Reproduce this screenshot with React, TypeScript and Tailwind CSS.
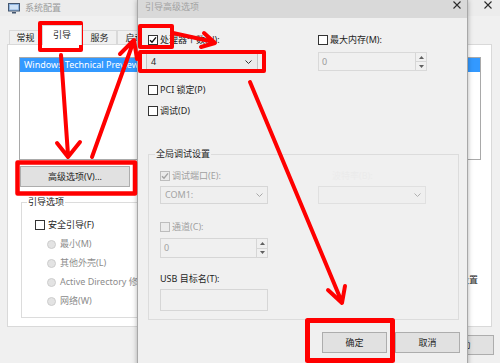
import React from "react";

function Check({ checked, disabled }: { checked?: boolean; disabled?: boolean }) {
  return (
    <span
      className={
        disabled
          ? "flex h-[10px] w-[10px] shrink-0 items-center justify-center border border-[#bdbdbd] bg-[#ebebeb]"
          : "flex h-[10px] w-[10px] shrink-0 items-center justify-center border border-[#333333] bg-white"
      }
    >
      {checked ? (
        <svg width="8" height="8" viewBox="0 0 8 8">
          <path d="M1 4.2 L3 6.3 L7 1.4" fill="none" stroke={disabled ? "#a3a3a3" : "#111"} strokeWidth="1.4" />
        </svg>
      ) : null}
    </span>
  );
}

function Radio({ label }: { label: string }) {
  return (
    <div className="flex h-[12px] items-center gap-[4px]">
      <span className="h-[9px] w-[9px] rounded-full border border-[#cdcdcd] bg-[#e3e3e3]" />
      <span className="text-[#8c8c8c]">{label}</span>
    </div>
  );
}

function Chevron({ color }: { color: string }) {
  return (
    <svg width="7" height="4" viewBox="0 0 7 4">
      <path d="M0.5 0.5 L3.5 3.5 L6.5 0.5" fill="none" stroke={color} strokeWidth="1" />
    </svg>
  );
}

function Spin() {
  return (
    <div className="flex w-[11px] flex-col border-l border-[#d6d6d6]">
      <div className="flex flex-1 items-center justify-center border-b border-[#d6d6d6]">
        <svg width="5" height="3" viewBox="0 0 5 3">
          <path d="M0 3 L2.5 0 L5 3Z" fill="#606060" />
        </svg>
      </div>
      <div className="flex flex-1 items-center justify-center">
        <svg width="5" height="3" viewBox="0 0 5 3">
          <path d="M0 0 L2.5 3 L5 0Z" fill="#606060" />
        </svg>
      </div>
    </div>
  );
}

function CloseX() {
  return (
    <svg width="8" height="8" viewBox="0 0 8 8">
      <path d="M0.5 0.5 L7.5 7.5 M7.5 0.5 L0.5 7.5" stroke="#2b2b2b" strokeWidth="1.1" />
    </svg>
  );
}

function Button({ label, w }: { label: string; w: string }) {
  return (
    <div className={`flex h-[21px] items-center justify-center border border-[#adadad] bg-[#e1e1e1] ${w}`}>
      {label}
    </div>
  );
}

function Annotations() {
  const red = "#ff0000";
  return (
    <svg className="pointer-events-none absolute inset-0" width="500" height="363" viewBox="0 0 500 363">
      <g fill="none" stroke={red} strokeWidth="4" strokeLinecap="round" strokeLinejoin="round">
        <rect x="40" y="23" width="41" height="27" strokeLinecap="butt" />
        <rect x="17.5" y="162.5" width="117.5" height="31" strokeWidth="4.5" strokeLinecap="butt" />
        <rect x="140" y="26" width="32" height="21" strokeLinecap="butt" />
        <rect x="140" y="52" width="124" height="19" strokeLinecap="butt" />
        <rect x="307.5" y="320.5" width="85" height="40" strokeWidth="5" strokeLinecap="butt" />

        <path d="M61 55 L68 155 M57 143 L68 157 L80 142" />
        <path d="M92 157 L133 43 M120 54 L134 40 L137 59" />
        <path d="M173 33 L214 42 M204 33 L215 43 L201 47" />
        <path d="M250 82 L341 300 M328 290 L342 303 L345 286" />
      </g>
    </svg>
  );
}

export default function App() {
  return (
    <div className="relative h-[363px] w-[500px] overflow-hidden bg-[#f0f0f0] font-['Noto_Sans','Noto_Sans_CJK_SC',sans-serif] text-[9px] leading-[12px] text-[#1e1e1e]">
      {/* 系统配置 window */}
      <div className="flex h-full flex-col">
        <div className="flex h-[16px] items-center bg-[#ececec] pl-[8px] pr-[8px]">
          <svg width="12" height="11" viewBox="0 0 12 11">
            <rect x="0.5" y="0.5" width="11" height="7.5" fill="#8fb3dd" stroke="#44566f" />
            <rect x="2" y="2" width="8" height="4.5" fill="#cfe2f6" />
            <path d="M4 9 H8 V10.5 H4Z" fill="#44566f" />
          </svg>
          <span className="ml-[5px] text-[#9b9b9b]">系统配置</span>
          <span className="ml-auto self-start pt-[1px]">
            <CloseX />
          </span>
        </div>

        <div className="flex h-[28px] items-end pl-[9px]">
          <div className="flex h-[14px] w-[33px] items-center justify-center border border-b-0 border-[#d9d9d9] bg-[#f0f0f0]">常规</div>
          <div className="relative z-10 -mb-px flex h-[20px] w-[40px] items-center justify-center border border-b-0 border-[#d9d9d9] bg-white pb-[2px]">引导</div>
          <div className="flex h-[14px] w-[35px] items-center justify-center border border-b-0 border-[#d9d9d9] bg-[#f0f0f0]">服务</div>
          <div className="flex h-[14px] w-[35px] items-center justify-center border border-b-0 border-[#d9d9d9] bg-[#f0f0f0]">启动</div>
        </div>

        <div className="ml-[7px] flex h-[283px] w-[485px] flex-col border border-[#d9d9d9] bg-white">
          <div className="ml-[11px] mt-[12px] h-[103px] w-[462px] border border-[#a9a9a9]">
            <div className="flex h-[14px] items-center bg-[#3399ff] pl-[4px] text-white">Windows Technical Preview</div>
          </div>

          <div className="ml-[12px] mt-[6px]">
            <Button label="高级选项(V)..." w="w-[110px]" />
          </div>

          <div className="mt-[15px] flex">
            <div className="relative ml-[13px] h-[116px] w-[300px] border border-[#dcdcdc]">
              <span className="absolute -top-[7px] left-[5px] bg-white px-[1px]">引导选项</span>
              <div className="flex flex-col gap-[7px] pl-[13px] pt-[16px]">
                <div className="flex h-[12px] items-center gap-[3px]">
                  <Check />
                  <span>安全引导(F)</span>
                </div>
                <div className="flex flex-col gap-[7px] pl-[12px]">
                  <Radio label="最小(M)" />
                  <Radio label="其他外壳(L)" />
                  <Radio label="Active Directory 修复" />
                  <Radio label="网络(W)" />
                </div>
              </div>
            </div>
            <div className="flex flex-1 justify-end pr-[13px] pt-[72px]">
              <span>成为永久设置</span>
            </div>
          </div>
        </div>

        <div className="mt-[8px] flex justify-end pr-[6px]">
          <div className="flex h-[20px] w-[65px] items-center justify-center border border-[#adadad] bg-[#e1e1e1]">帮助</div>
        </div>
      </div>

      {/* 引导高级选项 dialog */}
      <div className="absolute left-[137px] top-0 flex h-[380px] w-[331px] flex-col border-x border-[#a8a8a8] bg-[#f0f0f0] shadow-[0_0_5px_rgba(0,0,0,0.3)]">
        <div className="flex h-[18px] items-start bg-[#d9d9d9] pl-[7px] pr-[6px] pt-[1px]">
          <span className="text-[#a3a3a3]">引导高级选项</span>
          <span className="ml-auto">
            <CloseX />
          </span>
        </div>

        <div className="mt-[16px] flex h-[12px]">
          <div className="flex w-[180px] items-center gap-[2px] pl-[10px]">
            <Check checked />
            <span>处理器个数(N):</span>
          </div>
          <div className="flex items-center gap-[2px]">
            <Check />
            <span>最大内存(M):</span>
          </div>
        </div>

        <div className="mt-[6px] flex">
          <div className="w-[180px] pl-[8px]">
            <div className="flex h-[19px] w-[112px] items-center justify-between border border-[#c4c4c4] bg-[#ebebeb] pl-[4px] pr-[5px]">
              <span>4</span>
              <Chevron color="#333" />
            </div>
          </div>
          <div className="flex h-[19px] w-[109px] border border-[#d9d9d9] bg-[#f0f0f0]">
            <span className="flex flex-1 items-center pl-[3px] text-[#9a9a9a]">0</span>
            <Spin />
          </div>
        </div>

        <div className="mt-[13px] flex h-[12px] items-center gap-[2px] pl-[10px]">
          <Check />
          <span>PCI 锁定(P)</span>
        </div>
        <div className="mt-[9px] flex h-[12px] items-center gap-[2px] pl-[10px]">
          <Check />
          <span>调试(D)</span>
        </div>

        <div className="relative ml-[10px] mt-[37px] h-[166px] w-[311px] border border-[#dcdcdc]">
          <span className="absolute -top-[7px] left-[6px] bg-[#f0f0f0] px-[1px]">全局调试设置</span>
          <div className="flex flex-col pl-[11px]">
            <div className="mt-[15px] flex h-[12px] items-center">
              <div className="flex w-[158px] items-center gap-[2px]">
                <Check checked disabled />
                <span className="text-[#a0a0a0]">调试端口(E):</span>
              </div>
              <span className="pl-[14px] text-[#ebebeb]">波特率(B):</span>
            </div>
            <div className="mt-[4px] flex gap-[50px]">
              <div className="flex h-[18px] w-[108px] items-center justify-between border border-[#d6d6d6] bg-[#efefef] pl-[4px] pr-[4px] text-[#a3a3a3]">
                <span>COM1:</span>
                <Chevron color="#a8a8a8" />
              </div>
              <div className="flex h-[18px] w-[108px] items-center justify-end border border-[#e0e0e0] bg-[#efefef] pr-[4px]">
                <Chevron color="#b0b0b0" />
              </div>
            </div>
            <div className="mt-[17px] flex h-[12px] items-center gap-[2px]">
              <Check disabled />
              <span className="text-[#a0a0a0]">通道(C):</span>
            </div>
            <div className="mt-[5px] flex h-[20px] w-[108px] border border-[#d6d6d6] bg-[#f0f0f0]">
              <span className="flex flex-1 items-center pl-[3px] text-[#a0a0a0]">0</span>
              <Spin />
            </div>
            <div className="mt-[15px] flex h-[12px] items-center">USB 目标名(T):</div>
            <div className="mt-[4px] h-[22px] w-[108px] border border-[#d6d6d6] bg-[#f0f0f0]" />
          </div>
        </div>

        <div className="mt-[12px] flex gap-[8px] pl-[184px]">
          <Button label="确定" w="w-[65px]" />
          <Button label="取消" w="w-[65px]" />
        </div>
      </div>

      <Annotations />
    </div>
  );
}
